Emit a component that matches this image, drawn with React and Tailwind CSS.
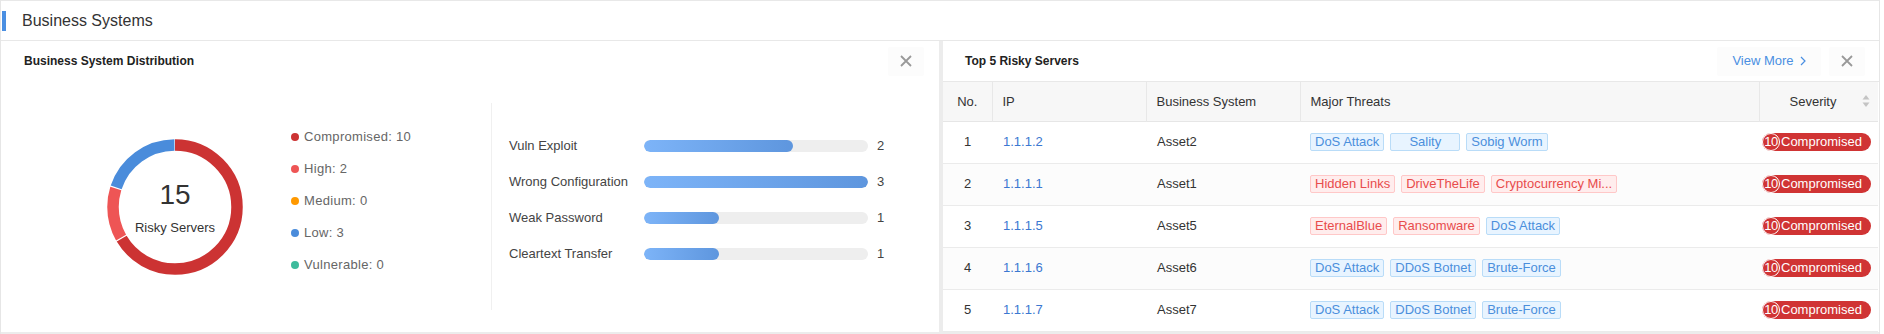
import React from "react";

const legend = [
  { label: "Compromised", value: 10, color: "bg-[#cc3333]" },
  { label: "High", value: 2, color: "bg-[#ee5555]" },
  { label: "Medium", value: 0, color: "bg-[#ff9900]" },
  { label: "Low", value: 3, color: "bg-[#4a8cdb]" },
  { label: "Vulnerable", value: 0, color: "bg-[#3dbb9c]" },
];

const bars = [
  { label: "Vuln Exploit", value: 2 },
  { label: "Wrong Configuration", value: 3 },
  { label: "Weak Password", value: 1 },
  { label: "Cleartext Transfer", value: 1 },
];

const rows = [
  { no: 1, ip: "1.1.1.2", bs: "Asset2", threats: [["DoS Attack", "b"], ["Sality", "b"], ["Sobig Worm", "b"]] },
  { no: 2, ip: "1.1.1.1", bs: "Asset1", threats: [["Hidden Links", "r"], ["DriveTheLife", "r"], ["Cryptocurrency Mi...", "r"]] },
  { no: 3, ip: "1.1.1.5", bs: "Asset5", threats: [["EternalBlue", "r"], ["Ransomware", "r"], ["DoS Attack", "b"]] },
  { no: 4, ip: "1.1.1.6", bs: "Asset6", threats: [["DoS Attack", "b"], ["DDoS Botnet", "b"], ["Brute-Force", "b"]] },
  { no: 5, ip: "1.1.1.7", bs: "Asset7", threats: [["DoS Attack", "b"], ["DDoS Botnet", "b"], ["Brute-Force", "b"]] },
];

function CloseIcon() {
  return (
    <svg width="12" height="12" viewBox="0 0 12 12">
      <path d="M1 1L11 11M11 1L1 11" stroke="#999" strokeWidth="1.8" fill="none" />
    </svg>
  );
}

function CloseButton() {
  return (
    <div className="w-[36px] h-[29px] bg-[#fcfcfc] rounded-[2px] flex items-center justify-center">
      <CloseIcon />
    </div>
  );
}

function Donut() {
  const r = 62;
  const C = 2 * Math.PI * r;
  const segs = [
    { v: 10, c: "#cc3333" },
    { v: 2, c: "#ee5555" },
    { v: 3, c: "#4a8cdb" },
  ];
  let start = 0;
  return (
    <div className="relative w-[136px] h-[136px] shrink-0">
      <svg width="136" height="136" viewBox="0 0 136 136">
        <g transform="rotate(-90 68 68)">
          {segs.map((s, i) => {
            const len = (s.v / 15) * C;
            const el = (
              <circle
                key={i}
                cx="68"
                cy="68"
                r={r}
                fill="none"
                stroke={s.c}
                strokeWidth="11.5"
                strokeDasharray={`${len - 1.2} ${C}`}
                strokeDashoffset={-start}
              />
            );
            start += len;
            return el;
          })}
        </g>
      </svg>
      <div className="absolute inset-0 flex flex-col items-center justify-center">
        <div className="text-[28px] leading-[28px] text-[#333] mt-[2px]">15</div>
        <div className="text-[13px] leading-[16px] text-[#333] mt-[11px]">Risky Servers</div>
      </div>
    </div>
  );
}

function Tag({ text, kind }) {
  const cls =
    kind === "r"
      ? "bg-[#ffeded] border-[#ffc8c8] text-[#e84c4c]"
      : "bg-[#e8f4ff] border-[#b9dcf8] text-[#4b8fdc]";
  return (
    <span
      className={`inline-block h-[18px] leading-[16px] min-w-[70px] whitespace-nowrap text-center px-[4px] border rounded-[2px] text-[13px] ${cls}`}
    >
      {text}
    </span>
  );
}

function SeverityBadge() {
  return (
    <span className="inline-flex items-center h-[18px] rounded-full bg-[#d03434] text-white text-[13px] leading-[16px]">
      <span className="w-[18px] h-[18px] rounded-full border border-white flex items-center justify-center text-[13px] tracking-[-0.5px]">
        10
      </span>
      <span className="pl-[1px] pr-[9px]">Compromised</span>
    </span>
  );
}

export default function App() {
  return (
    <div className="w-[1884px] h-[334px] bg-white font-['Liberation_Sans',Arial,sans-serif]">
      <div className="w-[1880px] h-[334px] bg-[#ececec] flex flex-col border-l border-r border-[#e6e6e6]">
        <div className="h-[41px] shrink-0 bg-white border-t border-b border-[#e8e8e8] flex items-center">
          <div className="w-[4px] h-[20px] ml-[1px] bg-[#4a8fe2]" />
          <div className="ml-[16px] text-[16px] text-[#333]">Business Systems</div>
        </div>
        <div className="flex gap-[4px] h-[291px] shrink-0">
          {/* Left panel */}
          <div className="w-[938px] shrink-0 bg-white flex flex-col">
            <div className="h-[40px] flex items-center justify-between pl-[23px] pr-[15px]">
              <span className="text-[12px] font-bold text-[#222]">Business System Distribution</span>
              <CloseButton />
            </div>
            <div className="flex items-start">
              <div className="ml-[106px] mt-[58px]">
                <Donut />
              </div>
              <div className="ml-[48px] mt-[46px] w-[200px] flex flex-col gap-[12px]">
                {legend.map((l) => (
                  <div key={l.label} className="h-[20px] flex items-center text-[13px] text-[#666]">
                    <span className={`w-[8px] h-[8px] rounded-full ${l.color}`} />
                    <span className="ml-[5px] tracking-[0.3px]">
                      {l.label}: {l.value}
                    </span>
                  </div>
                ))}
              </div>
              <div className="w-px h-[207px] mt-[22px] bg-[#f0f0f0]" />
              <div className="ml-[17px] mt-[55px] flex flex-col gap-[16px]">
                {bars.map((b) => (
                  <div key={b.label} className="h-[20px] flex items-center">
                    <span className="w-[135px] text-[13px] text-[#444]">{b.label}</span>
                    <div className="w-[224px] h-[12px] rounded-full bg-[#eeeeee] overflow-hidden">
                      <div
                        className="h-full rounded-full bg-linear-to-r from-[#7db4f8] to-[#5e96de]"
                        style={{ width: `${(b.value / 3) * 100}%` }}
                      />
                    </div>
                    <span className="ml-[9px] text-[13px] text-[#444]">{b.value}</span>
                  </div>
                ))}
              </div>
            </div>
          </div>
          {/* Right panel */}
          <div className="flex-1 bg-white flex flex-col">
            <div className="h-[41px] shrink-0 border-b border-[#e8e8e8] flex items-center justify-between pl-[22px] pr-[14px]">
              <span className="text-[12px] font-bold text-[#222]">Top 5 Risky Servers</span>
              <div className="flex items-center gap-[8px]">
                <div className="w-[104px] h-[29px] bg-[#fcfcfc] rounded-[2px] flex items-center justify-center gap-[6px] text-[13px] text-[#4a8fe2]">
                  <span>View More</span>
                  <svg width="6" height="10" viewBox="0 0 6 10">
                    <path d="M1 1L5 5L1 9" stroke="#4a8fe2" strokeWidth="1.2" fill="none" />
                  </svg>
                </div>
                <CloseButton />
              </div>
            </div>
            <table className="w-[935px] table-fixed border-collapse text-[13px] text-[#333]">
              <colgroup>
                <col className="w-[49px]" />
                <col className="w-[154px]" />
                <col className="w-[154px]" />
                <col className="w-[459px]" />
                <col className="w-[119px]" />
              </colgroup>
              <thead>
                <tr className="h-[39px] bg-[#f7f7f7] border-b border-[#e6e6e6]">
                  <th className="font-normal text-center">No.</th>
                  <th className="font-normal text-left pl-[10px] border-l border-[#e8e8e8]">IP</th>
                  <th className="font-normal text-left pl-[10px] border-l border-[#e8e8e8]">Business System</th>
                  <th className="font-normal text-left pl-[10px] border-l border-[#e8e8e8]">Major Threats</th>
                  <th className="font-normal border-l border-[#e8e8e8]">
                    <div className="flex items-center justify-between pl-[30px] pr-[8px]">
                      <span>Severity</span>
                      <svg width="8" height="14" viewBox="0 0 8 14">
                        <path d="M4 1L7.5 5.5H0.5Z" fill="#c4c4c4" />
                        <path d="M4 13L7.5 8.5H0.5Z" fill="#c4c4c4" />
                      </svg>
                    </div>
                  </th>
                </tr>
              </thead>
              <tbody>
                {rows.map((r) => (
                  <tr
                    key={r.no}
                    className={`h-[42px] border-b border-[#ebebeb] ${r.no % 2 === 0 ? "bg-[#fcfcfc]" : "bg-white"}`}
                  >
                    <td className="text-center">{r.no}</td>
                    <td className="pl-[11px] text-[#3b78d1]">{r.ip}</td>
                    <td className="pl-[11px]">{r.bs}</td>
                    <td className="pl-[10px]">
                      <div className="flex items-center gap-[6px]">
                        {r.threats.map(([t, k], i) => (
                          <Tag key={i} text={t} kind={k} />
                        ))}
                      </div>
                    </td>
                    <td className="pl-[3px]">
                      <SeverityBadge />
                    </td>
                  </tr>
                ))}
              </tbody>
            </table>
          </div>
        </div>
      </div>
    </div>
  );
}
